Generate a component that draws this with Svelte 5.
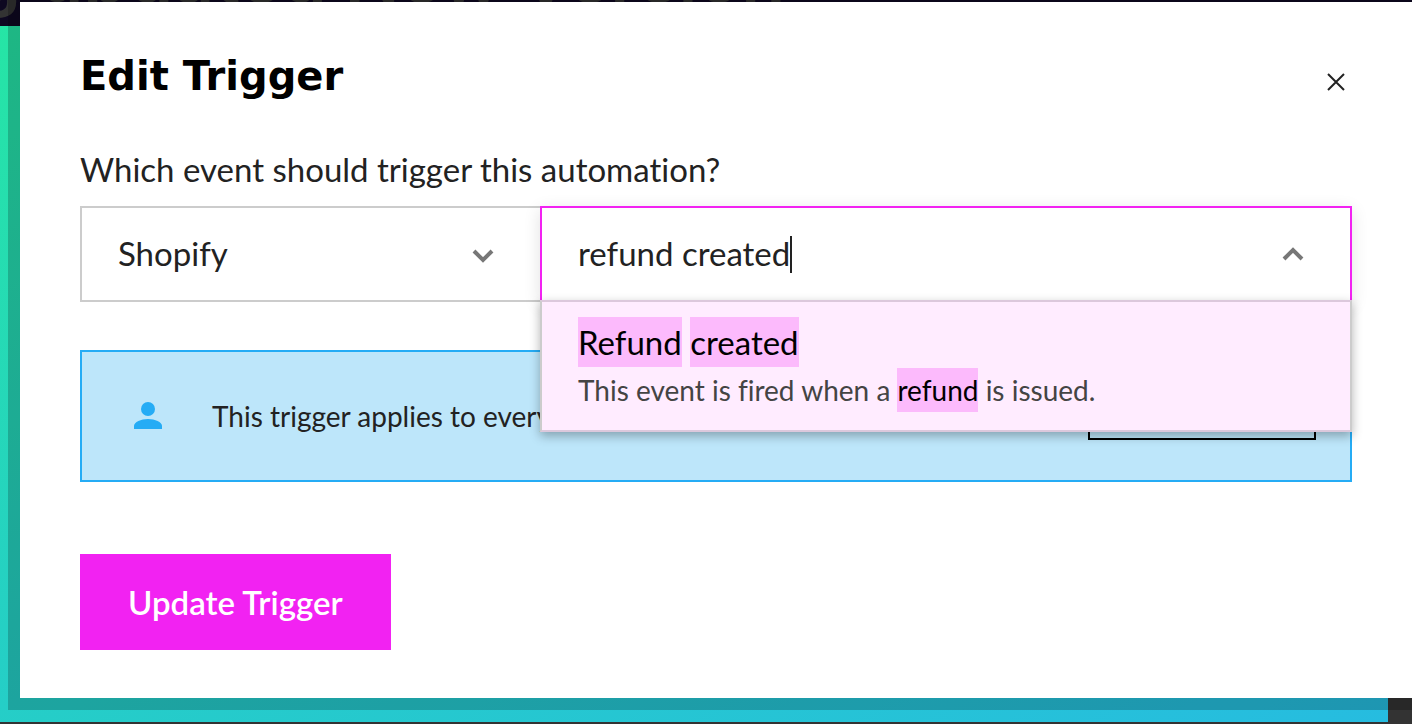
<script lang="ts">
  import { onMount } from "svelte";

  let app = $state("shopify");
  let query = $state("refund created");
  let queryInput: HTMLInputElement;

  const options = [
    {
      title: "Refund created",
      description: "This event is fired when a refund is issued.",
    },
  ];

  /** Splits text into parts, flagging the words that occur in the query. */
  function highlight(text: string) {
    const words = query.toLowerCase().split(/\s+/).filter(Boolean);

    return text
      .split(/(\s+)/)
      .map((part) => ({ part, match: words.includes(part.toLowerCase()) }));
  }

  onMount(() => {
    queryInput.focus();
    queryInput.setSelectionRange(query.length, query.length);
  });
</script>

<div class="page">
  <div class="backdrop" aria-hidden="true">
    <div class="backdrop__header">
      <span class="backdrop__title">g updated New Version</span>
    </div>
    <div class="backdrop__canvas"></div>
  </div>

  <div class="modal" role="dialog" aria-modal="true" aria-labelledby="modal-title">
    <header class="modal__header">
      <h1 id="modal-title" class="modal__title">Edit Trigger</h1>
      <button class="modal__close" aria-label="Close">
        <svg viewBox="0 0 18 18" width="18" height="18">
          <path d="M1 1l16 16M17 1L1 17" fill="none" stroke="#222" stroke-width="2" />
        </svg>
      </button>
    </header>

    <label class="label" for="trigger-event">Which event should trigger this automation?</label>

    <div class="fields">
      <div class="field field--app">
        <select class="field__select" aria-label="App" bind:value={app}>
          <option value="shopify">Shopify</option>
        </select>
        <svg class="field__chevron" viewBox="0 0 22 18" width="22" height="18">
          <path d="M2 6l9 9 9-9" />
        </svg>
      </div>

      <div class="field field--event">
        <input
          id="trigger-event"
          class="field__input"
          type="text"
          autocomplete="off"
          spellcheck="false"
          bind:this={queryInput}
          bind:value={query}
        />
        <span class="field__caret"></span>
        <svg class="field__chevron" viewBox="0 0 22 18" width="22" height="18">
          <path d="M2 14l9-9 9 9" />
        </svg>

        <ul class="menu">
          {#each options as option}
            <li>
              <button class="menu__option">
                <span class="menu__title">
                  {#each highlight(option.title) as { part, match }}{#if match}<mark>{part}</mark>{:else}{part}{/if}{/each}
                </span>
                <span class="menu__description">
                  {#each highlight(option.description) as { part, match }}{#if match}<mark>{part}</mark>{:else}{part}{/if}{/each}
                </span>
              </button>
            </li>
          {/each}
        </ul>
      </div>
    </div>

    <div class="notice">
      <svg class="notice__icon" viewBox="0 0 28 28" width="28" height="28">
        <circle cx="14" cy="7" r="7" />
        <path d="M0 27v-3c0-4 7-7 14-7s14 3 14 7v3z" />
      </svg>
      <p class="notice__text">This trigger applies to everyone</p>
      <button class="notice__button">Only some</button>
    </div>

    <button class="submit">Update Trigger</button>
  </div>
</div>

<style>
  :global(body) {
    background: #333;
  }

  .page {
    position: relative;
    box-sizing: border-box;
    min-height: 100vh;
    padding: 2px 0 26px 20px;
    overflow: hidden;
    color: #222;
    font-family: Lato, "Liberation Sans", sans-serif;
    font-variant-ligatures: none;
  }

  .page :is(button, input, select) {
    border: 0;
    border-radius: 0;
    color: inherit;
    font: inherit;
    font-variant-ligatures: none;
  }

  .backdrop {
    position: absolute;
    inset: 0;
    display: flex;
    flex-direction: column;
    padding-bottom: 2px;
  }

  .backdrop__header {
    display: flex;
    align-items: flex-end;
    height: 26px;
    overflow: hidden;
    background: #0e0821;
  }

  .backdrop__title {
    margin: 0 0 10px -24px;
    color: #333;
    font-family: Inter, sans-serif;
    font-size: 72px;
    font-weight: 600;
    line-height: 80px;
    white-space: nowrap;
  }

  .backdrop__canvas {
    flex: 1;
    margin-right: 24px;
    background: linear-gradient(155deg, #26e5a5, #25d0c4 45%, #26bce0);
  }

  .modal {
    position: relative;
    padding: 48px 60px;
    background: #fff;
    box-shadow: 0 0 0 12px rgba(0, 0, 0, 0.2);
  }

  .modal__header {
    display: flex;
    justify-content: space-between;
    min-height: 64px;
    margin-bottom: 32px;
  }

  .modal__title {
    margin: 0;
    color: #000;
    font-family: "DejaVu Sans", sans-serif;
    font-size: 40px;
    font-weight: 700;
    line-height: 52px;
  }

  .modal__close {
    display: flex;
    align-self: center;
    padding: 7px;
    background: none;
    cursor: pointer;
  }

  .label {
    display: block;
    margin-bottom: 14px;
    font-size: 33px;
    line-height: 46px;
  }

  .fields {
    display: grid;
    grid-template-columns: 460fr 812fr;
    margin-bottom: 48px;
    font-size: 33px;
  }

  .field {
    position: relative;
    display: flex;
    align-items: center;
    box-sizing: border-box;
    height: 96px;
    border: 2px solid #ccc;
  }

  .field--app {
    border-right: 0;
  }

  .field--event {
    padding: 0 80px 0 36px;
    border-color: #f222f2;
    background: #fff;
    box-shadow: 0 4px 16px rgba(0, 0, 0, 0.12);
  }

  .field .field__select {
    flex: 1;
    min-width: 0;
    height: 100%;
    padding: 0 80px 2px 36px;
    appearance: none;
    background: #fff;
    outline: none;
  }

  /* The input is as wide as its text, so the drawn caret follows it. */
  .field .field__input {
    box-sizing: border-box;
    field-sizing: content;
    max-width: 100%;
    height: 100%;
    padding: 0 0 2px;
    background: none;
    caret-color: transparent;
    outline: none;
  }

  .field__caret {
    width: 2px;
    height: 37px;
    background: #222;
  }

  .field__chevron {
    position: absolute;
    right: 46px;
    pointer-events: none;
    fill: none;
    stroke: #777;
    stroke-width: 4;
  }

  .menu {
    position: absolute;
    z-index: 1;
    top: 92px;
    right: -2px;
    left: -2px;
    margin: 0;
    padding: 0;
    border: 2px solid #ccc;
    border-color: #dcc8dc #ccc;
    background: #ffecff;
    box-shadow: 0 4px 10px rgba(0, 0, 0, 0.3);
    list-style: none;
  }

  .menu .menu__option {
    display: flex;
    flex-direction: column;
    width: 100%;
    padding: 16px 36px;
    background: none;
    text-align: left;
    cursor: pointer;
  }

  .menu__title {
    color: #000;
    font-size: 33px;
    line-height: 48px;
  }

  .menu__description {
    color: #444;
    font-size: 28px;
    line-height: 48px;
  }

  mark {
    padding: 5px 0;
    background: #fcbafc;
    color: #000;
  }

  .notice {
    display: flex;
    align-items: center;
    margin-bottom: 72px;
    padding: 40px 34px 40px 52px;
    border: 2px solid #25acf5;
    background: #bde6fa;
  }

  .notice__icon {
    fill: #25acf5;
  }

  .notice__text {
    flex: 1;
    margin: 0 0 0 50px;
    font-size: 28px;
    line-height: 48px;
  }

  .notice .notice__button {
    box-sizing: border-box;
    width: 228px;
    height: 48px;
    border: 2px solid #000;
    background: none;
    color: #000;
    font-size: 28px;
  }

  .page .submit {
    padding: 24px 48px;
    background: #f222f2;
    color: #fff;
    font-size: 33px;
    font-weight: 600;
    line-height: 48px;
    cursor: pointer;
  }
</style>
